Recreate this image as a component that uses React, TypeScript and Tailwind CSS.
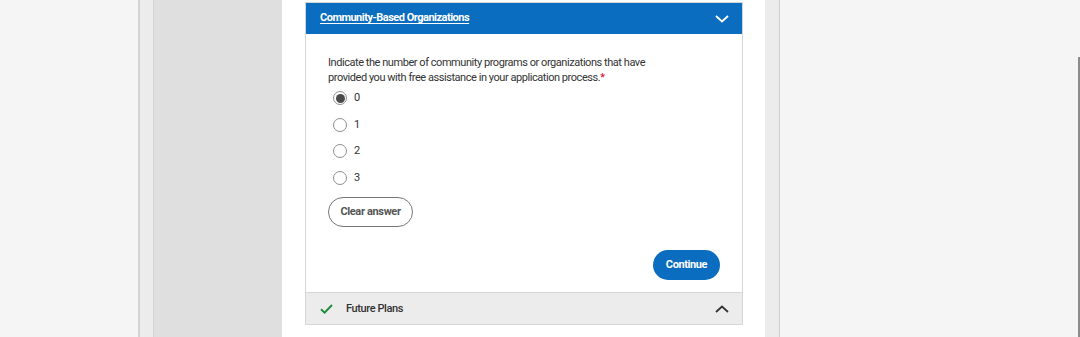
const font = { fontFamily: 'Roboto, "Liberation Sans", sans-serif' };

function Chevron({ up, className }: { up?: boolean; className?: string }) {
  return (
    <svg width="14" height="8" viewBox="0 0 14 8" className={className}>
      <path
        d={up ? 'M1 7L7 1.5L13 7' : 'M1 1L7 6.5L13 1'}
        fill="none"
        stroke="currentColor"
        strokeWidth="1.8"
      />
    </svg>
  );
}

function Radio({ label, checked }: { label: string; checked?: boolean }) {
  return (
    <label className="flex h-[26.6px] items-center gap-[7px] pl-[5px]">
      <span className="flex h-[14px] w-[14px] items-center justify-center rounded-full border border-[#8f8f8f] bg-white">
        {checked && <span className="h-[9px] w-[9px] rounded-full bg-[#4a4a4a]" />}
      </span>
      <span className="text-[11px] text-[#333]">{label}</span>
    </label>
  );
}

export default function App() {
  return (
    <div className="flex h-[337px] w-[1080px] overflow-hidden" style={font}>
      <div className="w-[138px] bg-[#f5f5f5]" />
      <div className="w-[2px] bg-[#d3d3d3]" />
      <div className="w-[14px] border-r border-[#d3d3d3] bg-[#ececec]" />
      <div className="w-[128px] bg-[#dfdfdf]" />

      <main className="w-[483px] bg-white pl-[23px] pr-[22px] pt-[2px]">
        <div className="border border-[#d6d6d6]">
          <div className="flex h-[31px] items-center justify-between bg-[#0b6dbf] pl-[14px] pr-[13px] text-white">
            <a className="text-[11px] font-bold tracking-[-0.5px] underline underline-offset-2">
              Community-Based Organizations
            </a>
            <Chevron />
          </div>

          <div className="pb-[12px] pl-[22px] pr-[22px] pt-[21px]">
            <p className="w-[330px] text-[11px] leading-[15px] tracking-[-0.45px] text-[#333]">
              Indicate the number of community programs or organizations that have provided you with free assistance in
              your application process.<span className="text-[#d0021b]">*</span>
            </p>
            <div>
              <Radio label="0" checked />
              <Radio label="1" />
              <Radio label="2" />
              <Radio label="3" />
            </div>
            <button className="mt-[6px] h-[30px] w-[85px] rounded-full border border-[#777] text-[11px] font-bold tracking-[-0.35px] text-[#555]">
              Clear answer
            </button>
            <div className="mt-[23px] flex justify-end">
              <button className="h-[30px] w-[67px] rounded-full bg-[#0b6dbf] text-[11px] font-bold tracking-[-0.4px] text-white">
                Continue
              </button>
            </div>
          </div>

          <div className="flex h-[32px] items-center border-t border-[#d6d6d6] bg-[#ececec] pl-[14px] pr-[13px]">
            <svg width="13" height="10" viewBox="0 0 13 10" className="text-[#1e8a3c]">
              <path d="M1 5.2L4.6 8.6L12 1" fill="none" stroke="currentColor" strokeWidth="1.9" />
            </svg>
            <span className="ml-[13px] text-[11px] font-medium tracking-[-0.4px] text-[#333]">Future Plans</span>
            <Chevron up className="ml-auto text-[#333]" />
          </div>
        </div>
      </main>

      <div className="w-[15px] border-r border-[#d0d0d0] bg-[#ececec]" />
      <div className="relative flex-1 bg-[#f5f5f5]">
        <div className="absolute right-0 top-[57px] h-[280px] w-[2px] bg-[#8c8c8c]" />
      </div>
    </div>
  );
}
